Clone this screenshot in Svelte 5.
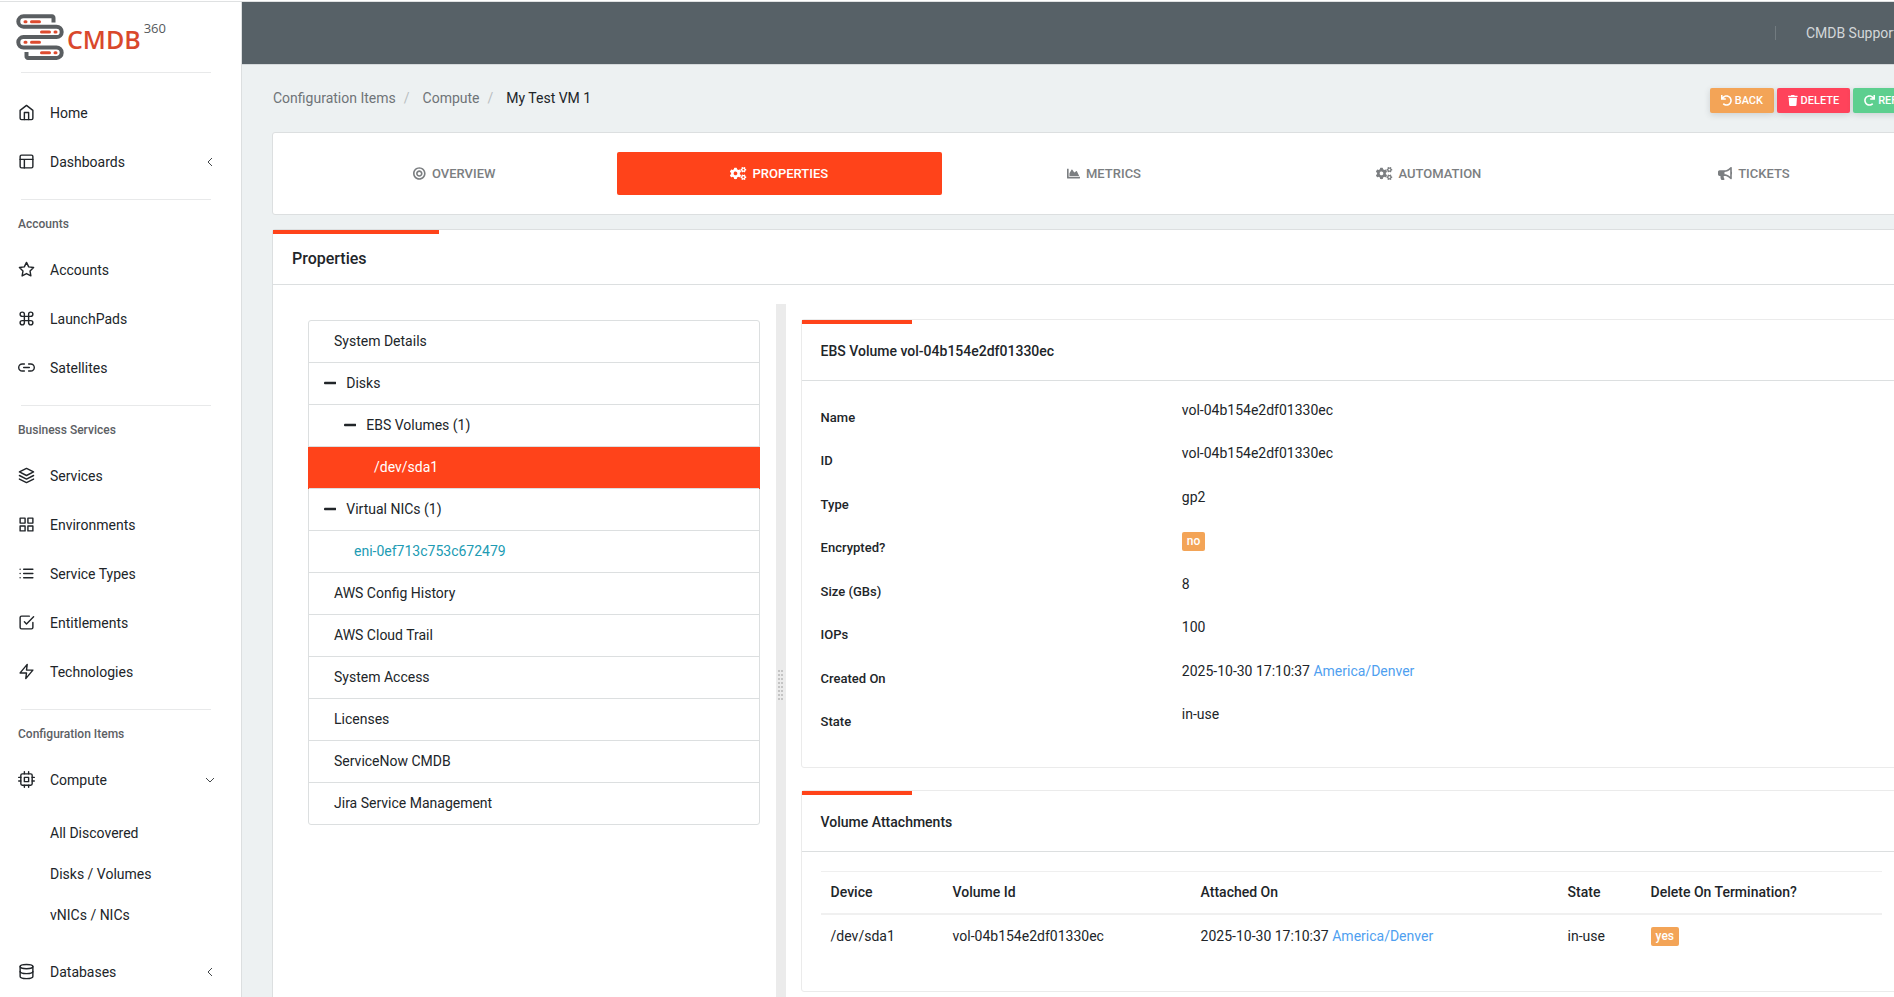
<script>
  const glyphs = {
    home: '<path d="M3 9l9-7 9 7v11a2 2 0 0 1-2 2H5a2 2 0 0 1-2-2z"/><path d="M9 22V12h6v10"/>',
    layout: '<rect x="3" y="3" width="18" height="18" rx="2"/><path d="M3 9h18M9 21V9"/>',
    star: '<path d="M12 2l3.09 6.26L22 9.27l-5 4.87 1.18 6.88L12 17.77l-6.18 3.25L7 14.14 2 9.27l6.91-1.01z"/>',
    command: '<path d="M18 3a3 3 0 0 0-3 3v12a3 3 0 1 0 3-3H6a3 3 0 1 0 3 3V6a3 3 0 1 0-3 3h12a3 3 0 0 0 0-6z"/>',
    link: '<path d="M15 7h3a5 5 0 0 1 0 10h-3m-6 0H6A5 5 0 0 1 6 7h3M8 12h8"/>',
    layers: '<path d="M12 2L2 7l10 5 10-5zM2 17l10 5 10-5M2 12l10 5 10-5"/>',
    grid: '<path d="M3 3h7v7H3zM14 3h7v7h-7zM14 14h7v7h-7zM3 14h7v7H3z"/>',
    list: '<path d="M8 6h13M8 12h13M8 18h13M3 6h.01M3 12h.01M3 18h.01"/>',
    check: '<path d="M9 11l3 3L22 4"/><path d="M21 12v7a2 2 0 0 1-2 2H5a2 2 0 0 1-2-2V5a2 2 0 0 1 2-2h11"/>',
    zap: '<path d="M13 2L3 14h9l-1 8 10-12h-9z"/>',
    cpu: '<rect x="4" y="4" width="16" height="16" rx="2"/><path d="M9 9h6v6H9zM9 1v3M15 1v3M9 20v3M15 20v3M20 9h3M20 14h3M1 9h3M1 14h3"/>',
    database: '<ellipse cx="12" cy="5" rx="9" ry="3"/><path d="M21 12c0 1.66-4 3-9 3s-9-1.34-9-3"/><path d="M3 5v14c0 1.66 4 3 9 3s9-1.34 9-3V5"/>'
  };

  const solid = {
    bullseye: [496, 'M248 8C111.03 8 0 119.03 0 256s111.03 248 248 248 248-111.03 248-248S384.97 8 248 8zm0 432c-101.69 0-184-82.29-184-184 0-101.69 82.29-184 184-184 101.69 0 184 82.29 184 184 0 101.69-82.29 184-184 184zm0-312c-70.69 0-128 57.31-128 128s57.31 128 128 128 128-57.31 128-128-57.31-128-128-128zm0 192c-35.29 0-64-28.71-64-64s28.71-64 64-64 64 28.71 64 64-28.71 64-64 64z'],
    cogs: [640, 'M512.1 191l-8.2 14.3c-3 5.3-9.4 7.5-15.1 5.4-11.8-4.4-22.6-10.7-32.1-18.6-4.6-3.8-5.8-10.5-2.8-15.7l8.2-14.3c-6.9-8-12.3-17.3-15.9-27.4h-16.5c-6 0-11.2-4.3-12.2-10.3-2-12-2.1-24.6 0-37.1 1-6 6.2-10.4 12.2-10.4h16.5c3.6-10.1 9-19.4 15.9-27.4l-8.2-14.3c-3-5.2-1.9-11.9 2.8-15.7 9.5-7.9 20.4-14.2 32.1-18.6 5.7-2.1 12.1.1 15.1 5.4l8.2 14.3c10.5-1.9 21.2-1.9 31.7 0L552 6.3c3-5.3 9.4-7.5 15.1-5.4 11.8 4.4 22.6 10.7 32.1 18.6 4.6 3.8 5.8 10.5 2.8 15.7l-8.2 14.3c6.9 8 12.3 17.3 15.9 27.4h16.5c6 0 11.2 4.3 12.2 10.3 2 12 2.1 24.6 0 37.1-1 6-6.2 10.4-12.2 10.4h-16.5c-3.6 10.1-9 19.4-15.9 27.4l8.2 14.3c3 5.2 1.9 11.9-2.8 15.7-9.5 7.9-20.4 14.2-32.1 18.6-5.7 2.1-12.1-.1-15.1-5.4l-8.2-14.3c-10.4 1.9-21.2 1.9-31.7 0zm-10.5-58.8c38.5 29.6 82.4-14.3 52.8-52.8-38.5-29.7-82.4 14.3-52.8 52.8zM386.3 286.1l33.7 16.8c10.1 5.8 14.5 18.1 10.5 29.1-8.9 24.2-26.4 46.4-42.6 65.8-7.4 8.9-20.2 11.1-30.3 5.3l-29.1-16.8c-16 13.7-34.6 24.6-54.9 31.7v33.6c0 11.6-8.3 21.6-19.7 23.6-24.6 4.2-50.4 4.4-75.9 0-11.5-2-20-11.9-20-23.6V418c-20.3-7.2-38.9-18-54.9-31.7L74 403c-10 5.8-22.9 3.6-30.3-5.3-16.2-19.4-33.3-41.6-42.2-65.7-4-10.9.4-23.2 10.5-29.1l33.3-16.8c-3.9-20.9-3.9-42.4 0-63.4L12 205.8c-10.1-5.8-14.6-18.1-10.5-29 8.9-24.2 26-46.4 42.2-65.8 7.4-8.9 20.2-11.1 30.3-5.3l29.1 16.8c16-13.7 34.6-24.6 54.9-31.7V57.1c0-11.5 8.2-21.5 19.6-23.5 24.6-4.2 50.5-4.4 76-.1 11.5 2 20 11.9 20 23.6v33.6c20.3 7.2 38.9 18 54.9 31.7l29.1-16.8c10-5.8 22.9-3.6 30.3 5.3 16.2 19.4 33.2 41.6 42.1 65.8 4 10.9.1 23.2-10 29.1l-33.7 16.8c3.9 21 3.9 42.5 0 63.5zm-117.6 21.1c59.2-77-28.7-164.9-105.7-105.7-59.2 77 28.7 164.9 105.7 105.7zm243.4 182.7l-8.2 14.3c-3 5.3-9.4 7.5-15.1 5.4-11.8-4.4-22.6-10.7-32.1-18.6-4.6-3.8-5.8-10.5-2.8-15.7l8.2-14.3c-6.9-8-12.3-17.3-15.9-27.4h-16.5c-6 0-11.2-4.3-12.2-10.3-2-12-2.1-24.6 0-37.1 1-6 6.2-10.4 12.2-10.4h16.5c3.6-10.1 9-19.4 15.9-27.4l-8.2-14.3c-3-5.2-1.9-11.9 2.8-15.7 9.5-7.9 20.4-14.2 32.1-18.6 5.7-2.1 12.1.1 15.1 5.4l8.2 14.3c10.5-1.9 21.2-1.9 31.7 0l8.2-14.3c3-5.3 9.4-7.5 15.1-5.4 11.8 4.4 22.6 10.7 32.1 18.6 4.6 3.8 5.8 10.5 2.8 15.7l-8.2 14.3c6.9 8 12.3 17.3 15.9 27.4h16.5c6 0 11.2 4.3 12.2 10.3 2 12 2.1 24.6 0 37.1-1 6-6.2 10.4-12.2 10.4h-16.5c-3.6 10.1-9 19.4-15.9 27.4l8.2 14.3c3 5.2 1.9 11.9-2.8 15.7-9.5 7.9-20.4 14.2-32.1 18.6-5.7 2.1-12.1-.1-15.1-5.4l-8.2-14.3c-10.4 1.9-21.2 1.9-31.7 0zM501.6 431c38.5 29.6 82.4-14.3 52.8-52.8-38.5-29.6-82.4 14.3-52.8 52.8z'],
    chart: [512, 'M500 384c6.6 0 12 5.4 12 12v40c0 6.6-5.4 12-12 12H12c-6.6 0-12-5.4-12-12V76c0-6.6 5.4-12 12-12h40c6.6 0 12 5.4 12 12v308h436zM372.7 159.5L288 216l-85.3-113.7c-5.1-6.8-15.5-6.3-19.9 1L96 248v104h384l-89.9-187.8c-3.2-6.5-11.4-8.7-17.4-4.7z'],
    bullhorn: [576, 'M576 240c0-23.63-12.95-44.04-32-55.12V32.01C544 23.26 537.02 0 512 0c-7.12 0-14.19 2.38-19.98 7.02l-85.03 68.03C364.28 109.19 310.66 128 256 128H64c-35.35 0-64 28.65-64 64v96c0 35.35 28.65 64 64 64h33.7c-1.39 10.48-2.18 21.14-2.18 32 0 39.77 9.26 77.35 25.56 110.94 5.19 10.69 16.52 17.06 28.4 17.06h74.28c26.05 0 41.69-29.84 25.9-50.56-16.4-21.52-26.15-48.36-26.15-77.44 0-11.11 1.62-21.79 4.41-32H256c54.66 0 108.28 18.81 150.98 52.95l85.03 68.03a32.023 32.023 0 0 0 19.98 7.02c24.92 0 32-22.78 32-32V295.13C563.05 284.04 576 263.63 576 240zm-96 141.42l-33.05-26.44C392.95 311.78 325.12 288 256 288v-96c69.12 0 136.95-23.78 190.95-66.98L480 98.58v282.84z'],
    undo: [512, 'M212.333 224.333H12c-6.627 0-12-5.373-12-12V12C0 5.373 5.373 0 12 0h48c6.627 0 12 5.373 12 12v78.112C117.773 39.279 184.26 7.47 258.175 8.007c136.906.994 246.448 111.623 246.157 248.532C504.041 393.258 393.12 504 256.333 504c-64.089 0-122.496-24.313-166.51-64.215-5.099-4.622-5.334-12.554-.467-17.42l33.967-33.967c4.474-4.474 11.662-4.717 16.401-.525C170.76 415.336 211.58 432 256.333 432c97.268 0 176-78.716 176-176 0-97.267-78.716-176-176-176-58.496 0-110.28 28.476-142.274 72.333h98.274c6.627 0 12 5.373 12 12v48c0 6.627-5.373 12-12 12z'],
    trash: [448, 'M432 32H312l-9.4-18.7A24 24 0 0 0 281.1 0H166.8a23.72 23.72 0 0 0-21.4 13.3L136 32H16A16 16 0 0 0 0 48v32a16 16 0 0 0 16 16h416a16 16 0 0 0 16-16V48a16 16 0 0 0-16-16zM53.2 467a48 48 0 0 0 47.9 45h245.8a48 48 0 0 0 47.9-45L416 128H32z'],
    minus: [448, 'M416 208H32c-17.67 0-32 14.33-32 32v32c0 17.67 14.33 32 32 32h384c17.67 0 32-14.33 32-32v-32c0-17.67-14.33-32-32-32z']
  };

  const nav = [
    { items: [{ icon: 'home', label: 'Home' }, { icon: 'layout', label: 'Dashboards', menu: 'closed' }] },
    {
      title: 'Accounts',
      items: [
        { icon: 'star', label: 'Accounts' },
        { icon: 'command', label: 'LaunchPads' },
        { icon: 'link', label: 'Satellites' }
      ]
    },
    {
      title: 'Business Services',
      items: [
        { icon: 'layers', label: 'Services' },
        { icon: 'grid', label: 'Environments' },
        { icon: 'list', label: 'Service Types' },
        { icon: 'check', label: 'Entitlements' },
        { icon: 'zap', label: 'Technologies' }
      ]
    },
    {
      title: 'Configuration Items',
      items: [
        { icon: 'cpu', label: 'Compute', menu: 'open', children: ['All Discovered', 'Disks / Volumes', 'vNICs / NICs'] },
        { icon: 'database', label: 'Databases', menu: 'closed' }
      ]
    }
  ];

  const tabs = [
    { icon: 'bullseye', label: 'Overview' },
    { icon: 'cogs', label: 'Properties' },
    { icon: 'chart', label: 'Metrics' },
    { icon: 'cogs', label: 'Automation' },
    { icon: 'bullhorn', label: 'Tickets' }
  ];
  let activeTab = $state('Properties');

  const tree = [
    { label: 'System Details', kind: 'root' },
    { label: 'Disks', kind: 'branch' },
    { label: 'EBS Volumes (1)', kind: 'branch nested' },
    { label: '/dev/sda1', kind: 'leaf nested' },
    { label: 'Virtual NICs (1)', kind: 'branch' },
    { label: 'eni-0ef713c753c672479', kind: 'leaf' },
    { label: 'AWS Config History', kind: 'root' },
    { label: 'AWS Cloud Trail', kind: 'root' },
    { label: 'System Access', kind: 'root' },
    { label: 'Licenses', kind: 'root' },
    { label: 'ServiceNow CMDB', kind: 'root' },
    { label: 'Jira Service Management', kind: 'root' }
  ];
  let selected = $state('/dev/sda1');

  const details = [
    { name: 'Name', value: 'vol-04b154e2df01330ec' },
    { name: 'ID', value: 'vol-04b154e2df01330ec' },
    { name: 'Type', value: 'gp2' },
    { name: 'Encrypted?', badge: 'no' },
    { name: 'Size (GBs)', value: '8' },
    { name: 'IOPs', value: '100' },
    { name: 'Created On', value: '2025-10-30 17:10:37', zone: 'America/Denver' },
    { name: 'State', value: 'in-use' }
  ];
</script>

{#snippet fa(name, flip = false)}
  <svg class="fa" class:flip viewBox="0 0 {solid[name][0]} 512" style:aspect-ratio="{solid[name][0]} / 512" aria-hidden="true">
    <path d={solid[name][1]} />
  </svg>
{/snippet}

<div class="app">
  <aside class="sidebar">
    <a class="brand" href="#home">
      <svg class="mark" viewBox="0 0 48 46" aria-hidden="true">
        <path class="coil" d="M37.500 8.500V4a1.500 1.500 0 0 0-1.500-1.700H7.500a5.200 5.200 0 0 0 0 10.400H40.500a5.200 5.200 0 0 1 0 10.400H7.500a5.200 5.200 0 0 0 0 10.400H40.500a5.200 5.200 0 0 1 0 10.400H12a1.500 1.500 0 0 1-1.500-1.700V38" />
        <path class="dashes" d="M9 7.700h1M15.500 7.700h8M25.500 17.900h8M39 17.900h1M9 28.300h1M15.500 28.300h8M25.500 38.700h8M39 38.700h1" />
      </svg>
      <span class="word">CMDB</span><span class="sup">360</span>
    </a>
    <nav>
      {#each nav as group}
        <hr />
        {#if group.title}<h2>{group.title}</h2>{/if}
        <ul class:first={!group.title}>
          {#each group.items as item}
            <li>
              <a class="item" href="#{item.label}">
                <svg class="feather" viewBox="0 0 24 24" aria-hidden="true">{@html glyphs[item.icon]}</svg>
                <span>{item.label}</span>
                {#if item.menu}
                  <svg class="chevron" class:open={item.menu === 'open'} viewBox="0 0 10 10" aria-hidden="true"><path d="M7 1L3 5l4 4" /></svg>
                {/if}
              </a>
              {#if item.children}
                <ul class="sub">
                  {#each item.children as child}<li><a href="#{child}">{child}</a></li>{/each}
                </ul>
              {/if}
            </li>
          {/each}
        </ul>
      {/each}
    </nav>
  </aside>

  <div class="page">
    <header class="topbar"><a href="#support">CMDB Support</a></header>

    <main>
      <div class="head">
        <ol class="crumbs">
          <li><a href="#ci">Configuration Items</a></li>
          <li><a href="#compute">Compute</a></li>
          <li aria-current="page">My Test VM 1</li>
        </ol>
        <div class="actions">
          <button class="back">{@render fa('undo')}Back</button>
          <button class="delete">{@render fa('trash')}Delete</button>
          <button class="refresh">{@render fa('undo', true)}Refresh</button>
        </div>
      </div>

      <div class="card tabs" role="tablist">
        {#each tabs as tab}
          <button role="tab" aria-selected={activeTab === tab.label} onclick={() => (activeTab = tab.label)}>
            {@render fa(tab.icon)}<span>{tab.label}</span>
          </button>
        {/each}
      </div>

      <section class="card accent">
        <h1>Properties</h1>
        <div class="split">
          <div class="left">
            <ul class="tree">
              {#each tree as node}
                <li>
                  <button class={node.kind} class:selected={selected === node.label} onclick={() => (selected = node.label)}>
                    {#if node.kind.startsWith('branch')}{@render fa('minus')}{/if}
                    {node.label}
                  </button>
                </li>
              {/each}
            </ul>
          </div>
          <div class="gutter"><span class="grip"></span></div>
          <div class="right">
            <section class="card accent soft">
              <h3>EBS Volume vol-04b154e2df01330ec</h3>
              <dl>
                {#each details as row}
                  <div>
                    <dt>{row.name}</dt>
                    <dd>
                      {#if row.badge}<span class="badge">{row.badge}</span>{:else}{row.value}{/if}
                      {#if row.zone}<a href="#zone">{row.zone}</a>{/if}
                    </dd>
                  </div>
                {/each}
              </dl>
            </section>
            <section class="card accent soft">
              <h3>Volume Attachments</h3>
              <div class="tablewrap">
                <table>
                  <colgroup><col class="c1" /><col class="c2" /><col class="c3" /><col class="c4" /><col /></colgroup>
                  <thead>
                    <tr><th>Device</th><th>Volume Id</th><th>Attached On</th><th>State</th><th>Delete On Termination?</th></tr>
                  </thead>
                  <tbody>
                    <tr>
                      <td>/dev/sda1</td>
                      <td>vol-04b154e2df01330ec</td>
                      <td>2025-10-30 17:10:37 <a href="#zone">America/Denver</a></td>
                      <td>in-use</td>
                      <td><span class="badge">yes</span></td>
                    </tr>
                  </tbody>
                </table>
              </div>
            </section>
          </div>
        </div>
      </section>
    </main>
  </div>
</div>

<style>
  :global(body) {
    overflow: hidden;
    background: #fff;
  }
  .app {
    display: flex;
    box-sizing: border-box;
    width: calc(100% + 74px);
    height: 100vh;
    overflow: hidden;
    padding-top: 1px;
    font: 14px/20px Roboto, sans-serif;
    color: #212529;
  }
  ul, ol, dl, dd, h1, h2, h3 {
    margin: 0;
    padding: 0;
    list-style: none;
  }
  a {
    color: inherit;
    text-decoration: none;
  }
  button {
    font: inherit;
    color: inherit;
    border: 0;
    background: none;
    cursor: pointer;
  }
  .fa {
    height: 1em;
    fill: currentColor;
    flex: none;
  }
  .flip {
    transform: scaleX(-1);
  }

  .sidebar {
    flex: none;
    width: 241px;
    border-top: 1px solid #dfe1e2;
    border-right: 1px solid #dcdfe0;
  }
  .brand {
    display: flex;
    align-items: flex-start;
    height: 58px;
    padding: 12px 0 0 16px;
  }
  .mark {
    width: 48px;
    height: 46px;
    fill: none;
    stroke-linecap: round;
  }
  .coil {
    stroke: #5a5e61;
    stroke-width: 4;
    stroke-linecap: butt;
  }
  .dashes {
    stroke: #dd4b2f;
    stroke-width: 3;
  }
  .word {
    padding: 9px 0 0 3px;
    font: 600 25px/32px 'Open Sans', sans-serif;
    color: #d9482c;
  }
  .sup {
    padding: 6px 0 0 3px;
    font: 500 13px/16px 'Open Sans', sans-serif;
    color: #55595c;
  }
  hr {
    height: 1px;
    margin: 0 30px 0 21px;
    border: 0;
    background: #e8e9ea;
  }
  nav > ul {
    padding-bottom: 13px;
  }
  nav > ul.first {
    padding-top: 15px;
  }
  h2 {
    padding: 14px 18px 11px;
    font-size: 12px;
    line-height: 20px;
    font-weight: 500;
    color: #5c6064;
  }
  .item {
    display: flex;
    align-items: center;
    height: 49px;
    padding: 0 26px 0 18px;
  }
  .feather {
    width: 17px;
    height: 17px;
    margin-right: 15px;
    fill: none;
    stroke: #212529;
    stroke-width: 2;
    stroke-linecap: round;
    stroke-linejoin: round;
  }
  .chevron {
    width: 10px;
    height: 10px;
    margin-left: auto;
    fill: none;
    stroke: #43474a;
    stroke-width: 1;
  }
  .chevron.open {
    transform: rotate(-90deg);
  }
  .sub {
    padding: 9px 0 11px;
  }
  .sub a {
    display: block;
    padding-left: 50px;
    line-height: 41px;
  }

  .page {
    flex: 1;
    min-width: 0;
    background: #edf1f2;
  }
  .topbar {
    display: flex;
    align-items: center;
    justify-content: flex-end;
    height: 62px;
    padding-right: 70px;
    border-top: 1px solid #dfe1e2;
    border-bottom: 1px solid #d5d9db;
    background: #576167;
  }
  .topbar a {
    padding-left: 30px;
    line-height: 14px;
    color: #d3d7d9;
    border-left: 1px solid #727b80;
  }
  main {
    padding: 0 32px 0 30px;
  }
  .head {
    display: flex;
    justify-content: space-between;
    height: 67px;
  }
  .crumbs {
    display: flex;
    padding: 23px 0 0 1px;
    color: #6f7478;
  }
  .crumbs li + li::before {
    content: '/';
    padding: 0 13px 0 8px;
    color: #b9bec1;
  }
  .crumbs li:last-child {
    color: #212529;
  }
  .actions {
    display: flex;
    align-items: flex-start;
    gap: 3px;
    padding-top: 23px;
  }
  .actions button {
    display: flex;
    align-items: center;
    gap: 3px;
    height: 25px;
    padding: 0 11px;
    border-radius: 2px;
    font-size: 11px;
    font-weight: 500;
    text-transform: uppercase;
    color: #fff;
    box-shadow: 0 2px 6px rgba(60, 70, 80, 0.18);
  }
  .back { background: #f3a457; }
  .delete { background: #ff435b; }
  .refresh { background: #5dcf8f; }

  .card {
    border: 1px solid #dcdfe0;
    border-radius: 3px;
    background: #fff;
  }
  .tabs {
    display: flex;
    margin-bottom: 14px;
    padding: 19px;
  }
  .tabs button {
    display: flex;
    flex: 1;
    align-items: center;
    justify-content: center;
    gap: 6px;
    height: 43px;
    border-radius: 2px;
    font-size: 13px;
    font-weight: 500;
    text-transform: uppercase;
    color: #7b7e81;
  }
  .tabs button[aria-selected='true'] {
    background: #ff431a;
    color: #fff;
  }
  .accent::before {
    content: '';
    display: block;
    width: 10%;
    height: 4px;
    background: #ff431a;
  }
  h1 {
    padding: 15px 19px;
    font-size: 16px;
    line-height: 20px;
    font-weight: 500;
    border-bottom: 1px solid #dcdfe0;
  }
  .split {
    display: flex;
    min-height: 762px;
    padding: 19px 20px;
  }
  .left {
    flex: 0 0 calc(30% - 4px);
    box-sizing: border-box;
    padding: 16px 16px 0 15px;
  }
  .tree {
    border: 1px solid #dcdfe0;
    border-radius: 3px;
  }
  .tree li + li {
    border-top: 1px solid #dcdfe0;
  }
  .tree button {
    display: flex;
    align-items: center;
    gap: 10px;
    width: 100%;
    height: 41px;
    padding: 0 25px 2px;
  }
  .tree .branch { padding-left: 15px; }
  .tree .branch.nested { padding-left: 35px; }
  .tree .leaf { padding-left: 45px; color: #209bb3; }
  .tree .leaf.nested { padding-left: 66px; }
  .tree .selected {
    width: calc(100% + 2px);
    height: 42px;
    margin: 0 -1px -1px;
    background: #ff431a;
    color: #fff;
  }
  .gutter {
    display: flex;
    align-items: center;
    flex: 0 0 10px;
    background: #ebebeb;
  }
  .grip {
    width: 5px;
    height: 30px;
    margin-left: 2px;
    background:
      repeating-linear-gradient(#c4c4c4 0 2px, transparent 2px 4px) 0 0 / 2px 100% no-repeat,
      repeating-linear-gradient(#c4c4c4 0 2px, transparent 2px 4px) 3px 0 / 2px 100% no-repeat;
  }
  .right {
    flex: 1;
    min-width: 0;
    padding: 15px 12px 0 15px;
  }
  .soft {
    margin-bottom: 22px;
    border-color: #ebebeb;
  }
  h3 {
    padding: 17px 19px 19px;
    font-size: 14px;
    line-height: 20px;
    font-weight: 500;
    border-bottom: 1px solid #dcdfe0;
  }
  dl {
    padding: 19px;
  }
  dl div {
    display: flex;
    height: 43px;
  }
  dl div:nth-child(even) {
    height: 44px;
  }
  dt {
    flex: 0 0 34%;
    padding-top: 8px;
    font-size: 13px;
    font-weight: 500;
  }
  dl a, td a {
    color: #4f9ff0;
  }
  .badge {
    display: inline-block;
    padding: 0 5px;
    border-radius: 2px;
    font-size: 12px;
    line-height: 19px;
    font-weight: 500;
    color: #fff;
    background: #f3a457;
  }
  .tablewrap {
    padding: 19px 20px 34px 19px;
  }
  table {
    width: 100%;
    table-layout: fixed;
    border-collapse: separate;
    border-spacing: 0;
  }
  .c1 { width: 122px; }
  .c2 { width: 248px; }
  .c3 { width: 367px; }
  .c4 { width: 83px; }
  th, td {
    height: 20px;
    padding: 10px 10px 11px;
    text-align: left;
    font-weight: 400;
  }
  th {
    border-top: 1px solid #efefef;
    border-bottom: 2px solid #f0f0f0;
    font-weight: 500;
  }
</style>
